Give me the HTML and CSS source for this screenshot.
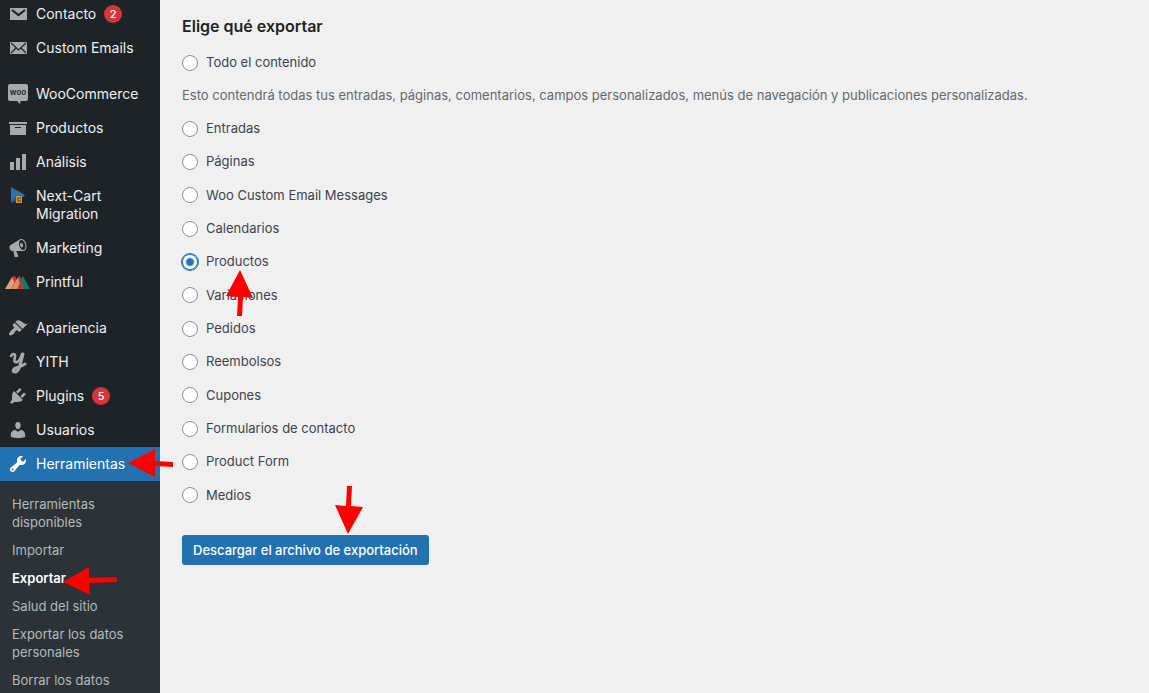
FILE: index.html
```
<!DOCTYPE html>
<html lang="es">
<head>
    <meta charset="UTF-8">
    <meta name="viewport" content="width=device-width, initial-scale=1.0">
    <title>Exportar</title>
    <link rel="stylesheet" href="styles.css">
</head>
<body>
    <nav class="sidebar">
        <ul class="menu">
            <li><a href="#">
                <svg class="icon" viewBox="0 0 20 20"><path d="M2 4h17v12H2z"/><path class="cut" stroke-width="2.2" d="M4 6l6.5 5L17 6"/></svg>
                <span>Contacto</span><span class="badge">2</span>
            </a></li>
            <li><a href="#">
                <svg class="icon" viewBox="0 0 20 20"><path d="M2 4h17v12H2z"/><path class="cut" stroke-width="1.2" d="M3 5l7.5 7L18 5M3 15l5-5M18 15l-5-5"/></svg>
                <span>Custom Emails</span>
            </a></li>
            <li class="group"><a href="#">
                <svg class="icon" viewBox="0 0 20 20"><path d="M2 0h16q2 0 2 2v13q0 2-2 2h-5.500l-.5 3-3-3H2q-2 0-2-2V2q0-2 2-2z"/><text class="woo" x="10" y="11">woo</text></svg>
                <span>WooCommerce</span>
            </a></li>
            <li><a href="#">
                <svg class="icon" viewBox="0 0 20 20"><path d="M19 4v2H1V4h18zM2 7h16v10H2V7zm11 3V9H7v1h6z"/></svg>
                <span>Productos</span>
            </a></li>
            <li><a href="#">
                <svg class="icon" viewBox="0 0 20 20"><path d="M2 10h4v8H2zM8 6h4v12H8zM14 2h4v16h-4z"/></svg>
                <span>Análisis</span>
            </a></li>
            <li><a href="#">
                <svg class="icon" viewBox="0 0 20 20"><path fill="#2872b5" d="M3 1l14 8-2 2H9l-6 6z"/><path fill="#1d578d" d="M3 16l6-7v6l-6 2z"/><path fill="#d98c2b" d="M8 10h6v7H8z"/><path fill="none" stroke="#574021" d="M13 12h-3v3h3"/></svg>
                <span>Next-Cart Migration</span>
            </a></li>
            <li><a href="#">
                <svg class="icon" viewBox="0 0 20 20"><path d="M18.150 5.940c.46 1.620.38 3.220-.02 4.480-.42 1.280-1.260 2.180-2.300 2.480-.16.06-.26.06-.4.06-.06.02-.12.02-.18.02-.06.02-.14.02-.22.02h-6.800l2.220 5.500c.02.14-.06.26-.14.34-.08.1-.24.16-.34.16H6.950c-.1 0-.26-.06-.34-.16-.08-.08-.16-.2-.14-.34l-1-5.500H4.250l-.02-.02c-.5.06-1.080-.18-1.540-.62s-.88-1.080-1.060-1.880c-.24-.8-.2-1.560-.02-2.200.18-.62.58-1.080 1.060-1.300l.02-.02 9-5.400c.1-.06.18-.1.24-.16.06-.04.14-.08.24-.12.16-.08.28-.12.5-.18 1.040-.3 2.240.1 3.220.98s1.840 2.240 2.260 3.860zm-2.580 5.980h-.02c.4-.1.74-.34 1.040-.7.58-.7.86-1.760.86-3.040 0-.64-.1-1.300-.28-1.980-.34-1.360-1.020-2.500-1.780-3.240s-1.680-1.100-2.460-.88c-.82.22-1.400.96-1.700 2-.32 1.040-.28 2.360.06 3.720.38 1.360 1 2.500 1.800 3.240.78.74 1.620 1.100 2.480.88zm-2.540-7.080c.22-.04.42-.02.62.04.38.16.76.48 1.020 1s.42 1.200.42 1.780c0 .3-.04.56-.12.8-.18.48-.44.84-.86.94-.34.1-.8-.06-1.140-.4s-.64-.86-.78-1.500c-.18-.62-.12-1.240.02-1.720s.48-.84.82-.94z"/></svg>
                <span>Marketing</span>
            </a></li>
            <li><a href="#">
                <svg class="icon" viewBox="0 0 20 20"><path fill="#dda27c" d="M-3 17L4 5l3 5-4 7z"/><path fill="#c93c2d" d="M4 5l3-1 6 13H9z"/><path fill="#e48a62" d="M3 17L10 5l3 5-4 7z"/><path fill="#c93c2d" d="M10 5l2-1 5 13h-4z"/><path fill="#197a6c" d="M12 9l3-5 7 13h-6z"/></svg>
                <span>Printful</span>
            </a></li>
            <li class="group"><a href="#">
                <svg class="icon" viewBox="0 0 20 20"><path d="M14.480 11.060L7.410 3.990l1.500-1.500c.5-.56 2.300-.47 3.510.32 1.210.8 1.430 1.280 2.910 2.100 1.180.64 2.450 1.260 4.450.85zm-.71.71L6.700 4.700 4.930 6.470c-.39.39-.39 1.020 0 1.410l1.060 1.060c.39.39.39 1.030 0 1.420-.6.6-1.430 1.110-2.210 1.690-.35.26-.7.53-1.010.84C1.430 14.230.4 16.080 1.400 17.070c.99 1 2.840-.03 4.180-1.360.31-.31.58-.66.85-1.020.57-.78 1.080-1.610 1.690-2.210.39-.39 1.020-.39 1.410 0l1.060 1.060c.39.39 1.020.39 1.410 0z"/></svg>
                <span>Apariencia</span>
            </a></li>
            <li><a href="#">
                <svg class="icon" viewBox="0 0 20 20"><path class="line" stroke-width="2.6" d="M3 4c2-3 5-2 4 1-1 4-1 6 2 5 2-1 4-4 5-8"/><path class="line" stroke-width="3" d="M15 2l-3 11c-1 5-3 7-5 7-3 0-2-3 1-4 3-1 6-2 9-4"/></svg>
                <span>YITH</span>
            </a></li>
            <li><a href="#">
                <svg class="icon" viewBox="0 0 20 20"><path d="M13.110 4.360L9.870 7.600 8 5.730l3.240-3.240c.35-.34 1.050-.2 1.560.32.52.51.66 1.210.31 1.550zm-8 1.770l.91-1.120 9.010 9.010-1.190.84c-.71.71-2.630 1.160-3.820 1.160H6.140L4.900 17.260c-.59.59-1.540.59-2.120 0-.59-.58-.59-1.530 0-2.120l1.240-1.240v-3.880c0-1.130.4-3.190 1.090-3.890zm7.260 3.970l3.240-3.240c.34-.35 1.040-.21 1.550.31.52.51.66 1.210.31 1.550l-3.240 3.250z"/></svg>
                <span>Plugins</span><span class="badge">5</span>
            </a></li>
            <li><a href="#">
                <svg class="icon" viewBox="0 0 20 20"><path d="M10 9.250c-2.270 0-2.730-3.440-2.730-3.440C7 4.020 7.820 2 9.970 2c2.160 0 2.980 2.020 2.710 3.810 0 0-.41 3.440-2.680 3.440zm0 2.570L12.720 10c2.390 0 4.520 2.330 4.520 4.530v2.490s-3.650 1.130-7.240 1.130c-3.650 0-7.240-1.130-7.240-1.130v-2.490c0-2.250 1.940-4.480 4.470-4.480z"/></svg>
                <span>Usuarios</span>
            </a></li>
            <li class="current"><a href="#">
                <svg class="icon" viewBox="0 0 20 20"><path d="M16.680 9.770c-1.340 1.340-3.300 1.670-4.950.99l-5.410 6.520c-.99.99-2.590.99-3.580 0s-.99-2.590 0-3.570l6.520-5.420c-.68-1.650-.35-3.610.99-4.950 1.280-1.280 3.120-1.620 4.720-1.060l-2.890 2.890 2.820 2.820 2.860-2.870c.53 1.580.18 3.390-1.080 4.650zM3.810 16.210c.4.39 1.040.39 1.430 0 .4-.4.4-1.040 0-1.430-.39-.4-1.030-.4-1.430 0-.39.39-.39 1.030 0 1.430z"/></svg>
                <span>Herramientas</span>
            </a>
                <svg class="arrow arrow-tools" width="45" height="28" viewBox="0 0 45 28"><path d="M0 14L27 0v12l18 1v5l-18-1v11z"/></svg>
            </li>
        </ul>
        <ul class="submenu">
            <li><a href="#">Herramientas disponibles</a></li>
            <li><a href="#">Importar</a></li>
            <li class="active"><a href="#">Exportar</a>
                <svg class="arrow arrow-export" width="54" height="28" viewBox="0 0 54 28"><path d="M0 15L26 0v11l28-1v5l-28 1 1 12z"/></svg>
            </li>
            <li><a href="#">Salud del sitio</a></li>
            <li><a href="#">Exportar los datos personales</a></li>
            <li><a href="#">Borrar los datos</a></li>
        </ul>
    </nav>

    <main class="content">
        <h2>Elige qué exportar</h2>
        <form id="export-filters">
            <div class="option">
                <input type="radio" name="content" id="all"><label for="all">Todo el contenido</label>
            </div>
            <p class="description">Esto contendrá todas tus entradas, páginas, comentarios, campos personalizados, menús de navegación y publicaciones personalizadas.</p>
            <div class="options">
                <div class="option"><input type="radio" name="content" id="posts"><label for="posts">Entradas</label></div>
                <div class="option"><input type="radio" name="content" id="pages"><label for="pages">Páginas</label></div>
                <div class="option"><input type="radio" name="content" id="emails"><label for="emails">Woo Custom Email Messages</label></div>
                <div class="option"><input type="radio" name="content" id="calendars"><label for="calendars">Calendarios</label></div>
                <div class="option">
                    <input type="radio" name="content" id="products" checked><label for="products">Productos</label>
                    <svg class="arrow arrow-products" width="28" height="46" viewBox="0 0 28 46"><path d="M14 0l13 28-10-1-1 19h-5l1-19-12-1z"/></svg>
                </div>
                <div class="option"><input type="radio" name="content" id="variations"><label for="variations">Variaciones</label></div>
                <div class="option"><input type="radio" name="content" id="orders"><label for="orders">Pedidos</label></div>
                <div class="option"><input type="radio" name="content" id="refunds"><label for="refunds">Reembolsos</label></div>
                <div class="option"><input type="radio" name="content" id="coupons"><label for="coupons">Cupones</label></div>
                <div class="option"><input type="radio" name="content" id="contact-forms"><label for="contact-forms">Formularios de contacto</label></div>
                <div class="option"><input type="radio" name="content" id="product-form"><label for="product-form">Product Form</label></div>
                <div class="option"><input type="radio" name="content" id="media"><label for="media">Medios</label></div>
            </div>
            <div class="submit">
                <button type="submit">Descargar el archivo de exportación</button>
                <svg class="arrow arrow-submit" width="28" height="48" viewBox="0 0 28 48"><path d="M12 0h5l-1 20 12 1-15 27L0 19l11 1z"/></svg>
            </div>
        </form>
    </main>
</body>
</html>
```
FILE: styles.css
```
* {
    box-sizing: border-box;
}

body {
    margin: 0;
    display: flex;
    height: 100vh;
    overflow: hidden;
    background: #f0f0f1;
    color: #3c434a;
    font-family: Inter, "Liberation Sans", sans-serif;
    font-size: 13px;
}

ul {
    list-style: none;
    margin: 0;
    padding: 0;
}

a {
    color: inherit;
    text-decoration: none;
}

/* Sidebar */
.sidebar {
    display: flex;
    flex-direction: column;
    flex: none;
    width: 160px;
    background: #1d2327;
}

.menu {
    margin-top: -3px;
    color: #f0f0f1;
    font-size: 14px;
    line-height: 18px;
}

.menu li {
    position: relative;
}

.menu a {
    display: flex;
    align-items: flex-start;
    gap: 8px;
    padding: 8px;
}

.menu .group {
    margin-top: 12px;
}

.icon {
    flex: none;
    width: 20px;
    height: 20px;
    margin: -1px 0;
    overflow: visible;
    fill: #a7aaad;
}

.icon .cut {
    fill: none;
    stroke: #1d2327;
}

.icon .line {
    fill: none;
    stroke: #a7aaad;
    stroke-linecap: round;
    stroke-linejoin: round;
}

.icon .woo {
    fill: #1d2327;
    font-size: 8px;
    font-weight: 600;
    text-anchor: middle;
}

.badge {
    flex: none;
    width: 18px;
    height: 18px;
    border-radius: 50%;
    background: #d63638;
    color: #fff;
    font-size: 11px;
    font-weight: 500;
    text-align: center;
}

.menu .current {
    background: #2271b1;
    color: #fff;
}

.current .icon {
    fill: #fff;
}

.submenu {
    flex: 1;
    padding-top: 9px;
    background: #2c3338;
    color: #b4b9be;
    line-height: 18px;
}

.submenu li {
    position: relative;
    padding: 5px 12px;
}

.submenu .active {
    color: #fff;
    font-weight: 600;
}

/* Export form */
.content {
    flex: 1;
    padding: 16px 22px;
}

h2 {
    margin: 0 0 10px;
    color: #1d2327;
    font-size: 16px;
    line-height: 20px;
    font-weight: 600;
}

.option {
    position: relative;
    display: flex;
    align-items: center;
    gap: 8px;
    line-height: 33px;
}

.options {
    display: grid;
    grid-auto-rows: 1fr;
    align-items: center;
    min-height: 400px;
}

.description {
    margin: 0;
    color: #646970;
    line-height: 33px;
}

input[type="radio"] {
    appearance: none;
    width: 16px;
    height: 16px;
    margin: 0;
    border: 1px solid #8c8f94;
    border-radius: 50%;
    background: #fff;
}

input[type="radio"]:checked {
    border-color: #2271b1;
    background: radial-gradient(circle, #2271b1 3px, #fff 5px);
    box-shadow: 0 0 0 1px #2271b1;
}

.submit {
    position: relative;
    margin-top: 23px;
}

button {
    height: 30px;
    padding: 0 11px;
    border: 0;
    border-radius: 3px;
    background: #2271b1;
    color: #fff;
    font-family: inherit;
    font-size: 13px;
    font-weight: 500;
    cursor: pointer;
}

/* Pointer arrows laid over the screen */
.arrow {
    position: absolute;
    z-index: 1;
    fill: #fe0000;
}

.arrow-tools {
    left: 128px;
    top: 2px;
}

.arrow-export {
    left: 63px;
    top: 3px;
}

.arrow-products {
    left: 44px;
    top: 25px;
}

.arrow-submit {
    left: 153px;
    bottom: 31px;
}
```
